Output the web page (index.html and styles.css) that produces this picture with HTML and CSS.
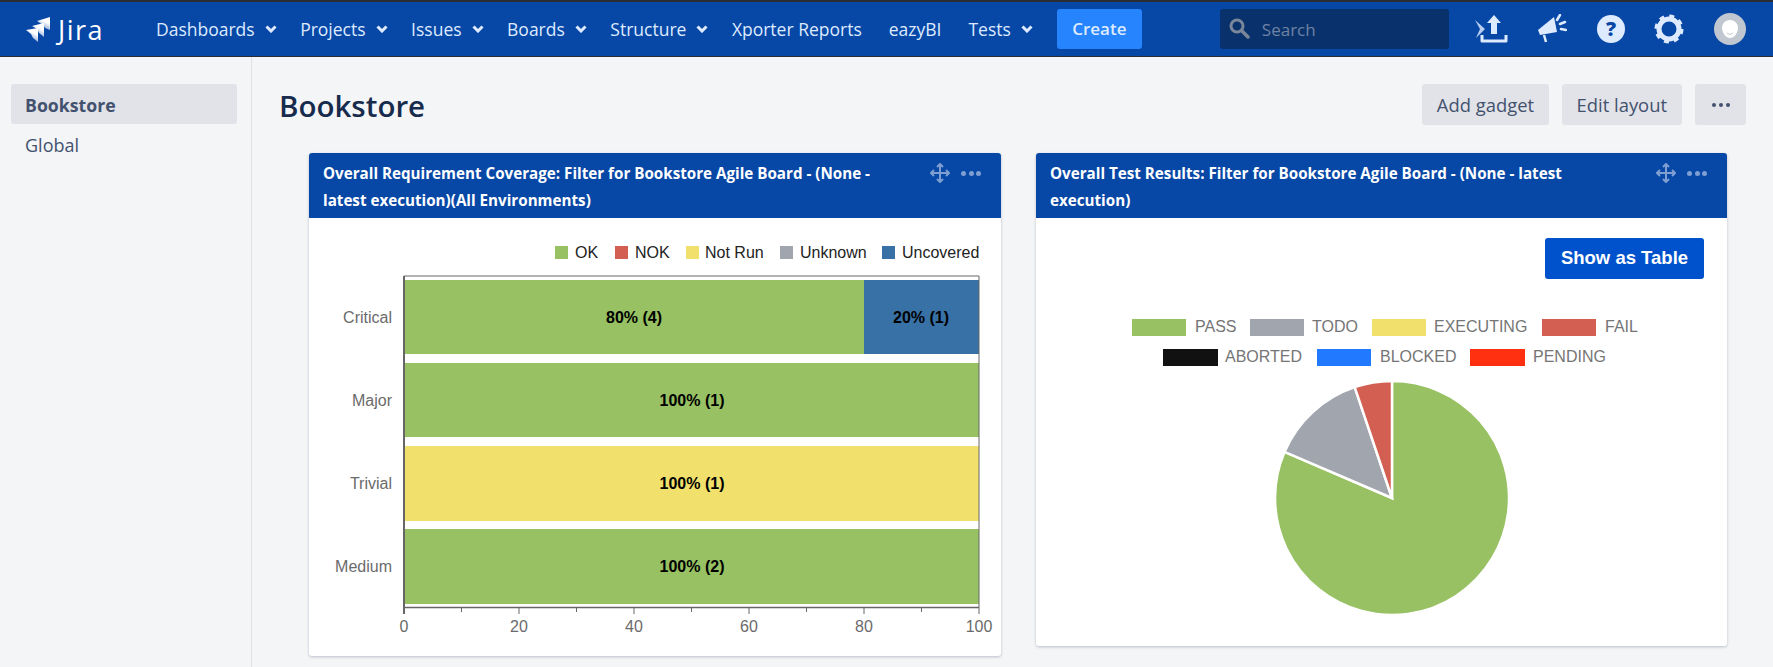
FILE: index.html
```html
<!DOCTYPE html>
<html lang="en">
<head>
    <meta charset="UTF-8">
    <title>Bookstore</title>
    <link rel="stylesheet" href="styles.css">
</head>
<body>
    <header class="topbar">
        <a class="logo" href="#">
            <svg class="logo-mark" width="25" height="25" viewBox="0 0 25 25">
                <defs>
                    <linearGradient id="fade" x1="0.8" y1="0" x2="0.3" y2="1">
                        <stop offset="0.35" stop-color="#fff"/>
                        <stop offset="1" stop-color="#fff" stop-opacity="0.35"/>
                    </linearGradient>
                </defs>
                <path d="M11 4 L24 0 V13 L19 11 L17 8 Z" fill="url(#fade)"/>
                <path d="M6 9 L18 6 V20 L13 16 L11 12 Z" fill="url(#fade)"/>
                <path d="M0 13 L12 11 V25 L7 21 L5 17 Z" fill="url(#fade)"/>
            </svg>
            <span class="logo-text">Jira</span>
        </a>
        <nav class="mainnav">
            <a href="#">Dashboards <svg class="chev" viewBox="0 0 12 8"><path d="M1.5 1.5 L6 6 L10.5 1.5"/></svg></a>
            <a href="#">Projects <svg class="chev" viewBox="0 0 12 8"><path d="M1.5 1.5 L6 6 L10.5 1.5"/></svg></a>
            <a href="#">Issues <svg class="chev" viewBox="0 0 12 8"><path d="M1.5 1.5 L6 6 L10.5 1.5"/></svg></a>
            <a href="#">Boards <svg class="chev" viewBox="0 0 12 8"><path d="M1.5 1.5 L6 6 L10.5 1.5"/></svg></a>
            <a href="#">Structure <svg class="chev" viewBox="0 0 12 8"><path d="M1.5 1.5 L6 6 L10.5 1.5"/></svg></a>
            <a href="#">Xporter Reports</a>
            <a href="#">eazyBI</a>
            <a href="#">Tests <svg class="chev" viewBox="0 0 12 8"><path d="M1.5 1.5 L6 6 L10.5 1.5"/></svg></a>
        </nav>
        <button class="create">Create</button>
        <div class="search">
            <svg width="22" height="24" viewBox="0 0 22 24"><circle cx="8" cy="9" r="6" fill="none" stroke="#7a869a" stroke-width="3"/><path d="M12.5 13.5 L19 20" stroke="#7a869a" stroke-width="3.5" stroke-linecap="round"/></svg>
            <span>Search</span>
        </div>
        <div class="tools">
            <svg width="33" height="30" viewBox="0 0 33 30">
                <path d="M0 6 L10 15 L1 24 L5 15 Z" fill="#b8cdf0"/>
                <path d="M19 1 L26 9 H22 V20 H16 V9 H12 Z" fill="#deebff"/>
                <path d="M7 21 V27 H31 V21" fill="none" stroke="#deebff" stroke-width="3" stroke-linejoin="round"/>
            </svg>
            <svg width="30" height="30" viewBox="0 0 30 30">
                <path d="M1 16 L17 3 L20 18 L3 21 Z" fill="#deebff"/>
                <path d="M7 21 L9 28" stroke="#deebff" stroke-width="2.5"/>
                <path d="M20 6 L23 1 M23 10 L28 8 M24 15 L29 16" stroke="#deebff" stroke-width="2.5" stroke-linecap="round"/>
            </svg>
            <svg width="28" height="28" viewBox="0 0 28 28">
                <circle cx="14" cy="14" r="14" fill="#deebff"/>
                <text class="help-mark" x="14" y="21" text-anchor="middle">?</text>
            </svg>
            <svg width="30" height="30" viewBox="0 0 30 30">
                <circle cx="15" cy="15" r="10" fill="none" stroke="#deebff" stroke-width="5"/>
                <circle cx="15" cy="15" r="12.5" fill="none" stroke="#deebff" stroke-width="4" stroke-dasharray="4.8 5"/>
            </svg>
            <svg width="32" height="32" viewBox="0 0 32 32">
                <circle cx="16" cy="16" r="16" fill="#c1c7d0"/>
                <path d="M16 7 C21 7 24 11 24 15 C24 20 20 25 16 25 C12 25 8 20 8 15 C8 11 11 7 16 7 Z" fill="#fff"/>
                <path d="M13 20 Q16 23 19 20" fill="none" stroke="#c1c7d0" stroke-width="1"/>
            </svg>
        </div>
    </header>

    <div class="page">
        <aside class="sidebar">
            <a class="side-item active" href="#">Bookstore</a>
            <a class="side-item" href="#">Global</a>
        </aside>

        <main class="content">
            <div class="page-head">
                <h1>Bookstore</h1>
                <div class="actions">
                    <button class="btn">Add gadget</button>
                    <button class="btn">Edit layout</button>
                    <button class="btn btn-more"><span class="dots"><i></i><i></i><i></i></span></button>
                </div>
            </div>

            <div class="gadgets">
                <section class="gadget">
                    <div class="gadget-head">
                        <h2>Overall Requirement Coverage: Filter for Bookstore Agile Board - (None - latest execution)(All Environments)</h2>
                        <div class="gadget-tools">
                            <svg width="20" height="20" viewBox="0 0 20 20"><path d="M10 1 V19 M1 10 H19 M7 4 L10 1 L13 4 M7 16 L10 19 L13 16 M4 7 L1 10 L4 13 M16 7 L19 10 L16 13" fill="none" stroke="#7f9fd2" stroke-width="2"/></svg>
                            <span class="dots"><i></i><i></i><i></i></span>
                        </div>
                    </div>
                    <svg class="chart" width="692" height="438" viewBox="0 0 692 438">
                        <!-- legend -->
                        <rect x="246" y="28" width="13" height="13" fill="#97c162"/>
                        <text class="legend" x="266" y="40">OK</text>
                        <rect x="306" y="28" width="13" height="13" fill="#d25f52"/>
                        <text class="legend" x="326" y="40">NOK</text>
                        <rect x="377" y="28" width="13" height="13" fill="#f1e06c"/>
                        <text class="legend" x="396" y="40">Not Run</text>
                        <rect x="471" y="28" width="13" height="13" fill="#a1a5ad"/>
                        <text class="legend" x="491" y="40">Unknown</text>
                        <rect x="573" y="28" width="13" height="13" fill="#3871a5"/>
                        <text class="legend" x="593" y="40">Uncovered</text>
                        <!-- bars -->
                        <rect x="96" y="62" width="459" height="74" fill="#97c162"/>
                        <rect x="555" y="62" width="115" height="74" fill="#3871a5"/>
                        <rect x="96" y="145" width="574" height="74" fill="#97c162"/>
                        <rect x="96" y="228" width="574" height="75" fill="#f1e06c"/>
                        <rect x="96" y="311" width="574" height="75" fill="#97c162"/>
                        <text class="bar-label" x="325" y="105">80% (4)</text>
                        <text class="bar-label" x="612" y="105">20% (1)</text>
                        <text class="bar-label" x="383" y="188">100% (1)</text>
                        <text class="bar-label" x="383" y="271">100% (1)</text>
                        <text class="bar-label" x="383" y="354">100% (2)</text>
                        <!-- axes -->
                        <path d="M95 58 H670 V389" fill="none" stroke="#666" stroke-width="1"/>
                        <path d="M95 58 V396" stroke="#666" stroke-width="2"/>
                        <path d="M95 389.5 H670" stroke="#666" stroke-width="1.5"/>
                        <path d="M210 389 V396 M325 389 V396 M440 389 V396 M555 389 V396 M670 389 V396 M152.500 389 V394 M267.500 389 V394 M382.500 389 V394 M497.500 389 V394 M612.500 389 V394" stroke="#666" stroke-width="1"/>
                        <text class="tick-y" x="83" y="105">Critical</text>
                        <text class="tick-y" x="83" y="188">Major</text>
                        <text class="tick-y" x="83" y="271">Trivial</text>
                        <text class="tick-y" x="83" y="354">Medium</text>
                        <text class="tick-x" x="95" y="414">0</text>
                        <text class="tick-x" x="210" y="414">20</text>
                        <text class="tick-x" x="325" y="414">40</text>
                        <text class="tick-x" x="440" y="414">60</text>
                        <text class="tick-x" x="555" y="414">80</text>
                        <text class="tick-x" x="670" y="414">100</text>
                    </svg>
                </section>

                <section class="gadget">
                    <div class="gadget-head">
                        <h2>Overall Test Results: Filter for Bookstore Agile Board - (None - latest execution)</h2>
                        <div class="gadget-tools">
                            <svg width="20" height="20" viewBox="0 0 20 20"><path d="M10 1 V19 M1 10 H19 M7 4 L10 1 L13 4 M7 16 L10 19 L13 16 M4 7 L1 10 L4 13 M16 7 L19 10 L16 13" fill="none" stroke="#7f9fd2" stroke-width="2"/></svg>
                            <span class="dots"><i></i><i></i><i></i></span>
                        </div>
                    </div>
                    <div class="gadget-bar">
                        <button class="show-table">Show as Table</button>
                    </div>
                    <svg class="chart" width="691" height="367" viewBox="0 0 691 367">
                        <rect x="96" y="40" width="54" height="17" fill="#97c162"/>
                        <text class="pie-legend" x="159" y="53">PASS</text>
                        <rect x="214" y="40" width="54" height="17" fill="#a1a5ad"/>
                        <text class="pie-legend" x="276" y="53">TODO</text>
                        <rect x="336" y="40" width="54" height="17" fill="#f1e06c"/>
                        <text class="pie-legend" x="398" y="53">EXECUTING</text>
                        <rect x="506" y="40" width="54" height="17" fill="#d25f52"/>
                        <text class="pie-legend" x="569" y="53">FAIL</text>
                        <rect x="127" y="70" width="55" height="17" fill="#111"/>
                        <text class="pie-legend" x="189" y="83">ABORTED</text>
                        <rect x="281" y="70" width="54" height="17" fill="#2079ff"/>
                        <text class="pie-legend" x="344" y="83">BLOCKED</text>
                        <rect x="434" y="70" width="55" height="17" fill="#ff3010"/>
                        <text class="pie-legend" x="497" y="83">PENDING</text>
                        <g stroke="#fff" stroke-width="2.500">
                            <path d="M356 219 L356 102 A117 117 0 1 1 248.500 172.900 Z" fill="#97c162"/>
                            <path d="M356 219 L248.500 172.900 A117 117 0 0 1 318.700 108.100 Z" fill="#a1a5ad"/>
                            <path d="M356 219 L318.700 108.100 A117 117 0 0 1 356 102 Z" fill="#d25f52"/>
                        </g>
                    </svg>
                </section>
            </div>
        </main>
    </div>
</body>
</html>
```

FILE: styles.css
```css
* { box-sizing: border-box; }
html, body { height: 100%; }
body { margin: 0; background-color: #f4f5f7; color: #172b4d; font-family: "Open Sans", sans-serif; overflow: hidden; }
a { text-decoration: none; color: inherit; }
button { font-family: inherit; border: none; cursor: pointer; }

.topbar { display: flex; align-items: center; height: 57px; padding-left: 26px; background-color: #0747a6; border-top: 2px solid #2a2d33; border-bottom: 1px solid #2a2d33; }
.logo { display: flex; align-items: center; gap: 7px; width: 130px; color: #fff; }
.logo-text { font-size: 27px; line-height: 1; font-weight: 400; letter-spacing: 1.5px; }
.mainnav { display: flex; align-items: center; gap: 27px; font-size: 17.5px; color: #deebff; }
.mainnav a { display: flex; align-items: center; gap: 10px; white-space: nowrap; }
.chev { width: 12px; height: 8px; margin-right: -3.5px; fill: none; stroke: #deebff; stroke-width: 3; }
.create { width: 85px; height: 40px; margin-left: 27.5px; padding-bottom: 2px; background-color: #2684ff; border-radius: 3px; font-size: 17px; font-weight: 600; color: #deebff; }
.search { display: flex; align-items: center; gap: 11px; width: 229px; height: 40px; margin-left: 78px; padding-left: 9px; background-color: #09326c; border-radius: 3px; font-size: 17px; color: #6f82a3; }
.tools { display: flex; align-items: center; gap: 29.5px; margin-left: 26px; }

.page { display: flex; height: calc(100% - 57px); }
.sidebar { flex: none; width: 252px; padding: 27px 14px 0 11px; border-right: 1px solid #dfe1e6; }
.side-item { display: block; height: 40px; line-height: 42px; padding-left: 14px; border-radius: 3px; font-size: 18px; color: #42526e; }
.side-item.active { background-color: #e2e3e9; font-size: 17.7px; font-weight: 700; }

.content { flex: 1; padding: 27px 27px 0 27px; }
.page-head { display: flex; align-items: center; justify-content: space-between; height: 41px; }
h1 { margin: 2px 0 0; font-size: 29.5px; font-weight: 600; color: #172b4d; }
.actions { display: flex; gap: 13.5px; }
.btn { height: 41px; padding: 0 14.5px; background-color: #e2e3e9; color: #42526e; border-radius: 3px; font-size: 18.4px; }
.btn-more { display: flex; align-items: center; justify-content: center; width: 51px; padding: 0; }
.btn-more .dots { gap: 3px; }
.btn-more .dots i { width: 4px; height: 4px; background-color: #42526e; }

.gadgets { display: flex; align-items: flex-start; gap: 35px; margin: 28px 19px 0 30px; }
.gadget { flex: 1; background-color: #fff; border-radius: 3px; box-shadow: 0 1px 3px rgba(9,30,66,0.25); }
.gadget-head { display: flex; justify-content: space-between; height: 65px; padding: 7px 20px 0 14px; background-color: #0747a6; border-radius: 3px 3px 0 0; color: #fff; }
h2 { margin: 0; width: 575px; font-size: 15.2px; line-height: 26.5px; font-weight: 700; }
.gadget-tools { display: flex; align-items: center; gap: 11px; height: 24px; margin-top: 1px; }
.dots { display: flex; gap: 2.5px; }
.dots i { width: 5px; height: 5px; border-radius: 50%; background-color: #7f9fd2; }
.gadget-bar { display: flex; justify-content: flex-end; padding: 20px 23px 0 0; }
.show-table { width: 159px; height: 41px; padding-bottom: 2px; background-color: #0052cc; color: #fff; border-radius: 3px; font-family: "Liberation Sans", sans-serif; font-size: 18.5px; font-weight: 700; }

.chart { display: block; font-family: "Liberation Sans", sans-serif; font-size: 16px; }
.legend { fill: #222; }
.bar-label { fill: #000; font-weight: 700; text-anchor: middle; }
.tick-y { fill: #6b6b6b; text-anchor: end; }
.tick-x { fill: #6b6b6b; text-anchor: middle; }
.pie-legend { fill: #757575; }
.help-mark { fill: #0747a6; font-family: "Open Sans", sans-serif; font-size: 20px; font-weight: 800; }
```
